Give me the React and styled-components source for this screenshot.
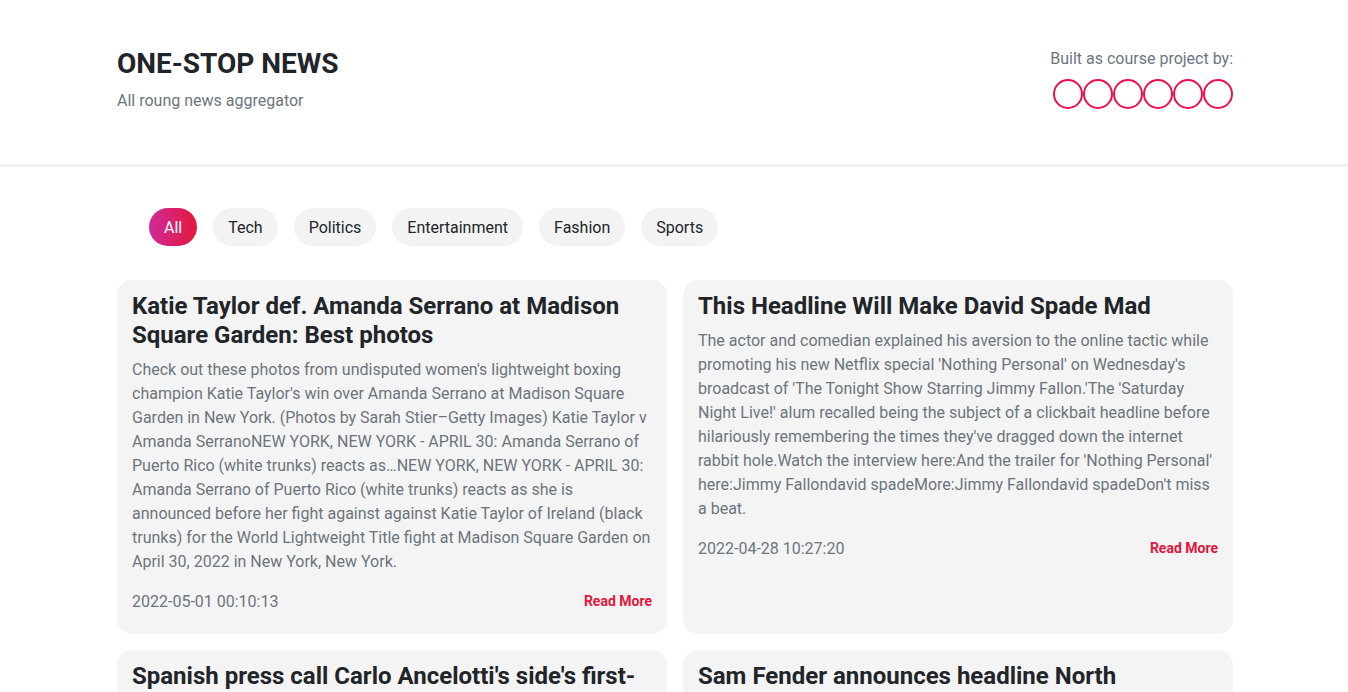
import React from "react";
import styled, { createGlobalStyle } from "styled-components";

const GlobalStyle = createGlobalStyle`
    body {
        margin: 0;
        background: #fff;
        font-family: Roboto, "Liberation Sans", sans-serif;
        color: #212529;
    }
    * { box-sizing: border-box; }
`

const Header = styled.header`
    border-bottom: 3px solid #f2f2f2;
`

const Container = styled.div`
    width: 1116px;
    margin-left: calc(50% - 557px);
`

const HeaderInner = styled(Container)`
    display: flex;
    justify-content: space-between;
    align-items: flex-start;
    padding: 47px 0 51px;
`

const Brand = styled.h1`
    margin: 0;
    font-size: 28px;
    font-weight: 700;
    line-height: 34px;
    color: #212529;
`

const Tagline = styled.p`
    margin: 8px 0 0;
    font-size: 16px;
    line-height: 24px;
    color: #6c757d;
`

const Credits = styled.div`
    display: flex;
    flex-direction: column;
    align-items: flex-end;
    gap: 9px;
`

const CreditsLabel = styled.span`
    font-size: 16px;
    line-height: 24px;
    color: #6c757d;
`

const Avatars = styled.div`
    display: flex;
    margin-top: -1px;
`

const Avatar = styled.span`
    width: 30px;
    height: 30px;
    border: 2px solid #ec0f50;
    border-radius: 50%;
`

const Filters = styled.nav`
    display: flex;
    gap: 16px;
    padding: 41px 0 34px 32px;
`

const Chip = styled.button`
    border: none;
    border-radius: 20px;
    padding: 8px 15px 6px;
    font-family: inherit;
    font-size: 16px;
    line-height: 24px;
    cursor: pointer;
    color: ${p => p.$active ? "#fff" : "#212529"};
    background: ${p => p.$active ? "linear-gradient(to right, #cf2a9b, #e4183b)" : "#f3f3f3"};
`

const Grid = styled.div`
    display: grid;
    grid-template-columns: 1fr 1fr;
    gap: 16px;
`

const Card = styled.article`
    display: flex;
    flex-direction: column;
    background: #f4f4f4;
    border-radius: 15px;
    padding: 12px 15px 20px;
`

const Title = styled.h2`
    margin: 0;
    font-size: 24px;
    font-weight: 700;
    line-height: 29px;
    color: #212529;
`

const Summary = styled.p`
    margin: 8px 0 0;
    font-size: 16px;
    line-height: 24px;
    color: #6c757d;
`

const Footer = styled.div`
    display: flex;
    justify-content: space-between;
    align-items: center;
    margin-top: 16px;
`

const Stamp = styled.span`
    font-size: 16px;
    line-height: 24px;
    color: #6c757d;
`

const ReadMore = styled.a`
    margin-bottom: 2px;
    font-size: 14px;
    font-weight: 700;
    color: #e0173c;
    text-decoration: none;
`

const categories = ["All", "Tech", "Politics", "Entertainment", "Fashion", "Sports"];

const articles = [
    {
        title: "Katie Taylor def. Amanda Serrano at Madison Square Garden: Best photos",
        summary: "Check out these photos from undisputed women's lightweight boxing champion Katie Taylor's win over Amanda Serrano at Madison Square Garden in New York. (Photos by Sarah Stier\u2013Getty Images) Katie Taylor v Amanda SerranoNEW YORK, NEW YORK - APRIL 30: Amanda Serrano of Puerto Rico (white trunks) reacts as\u2026NEW YORK, NEW YORK - APRIL 30: Amanda Serrano of Puerto Rico (white trunks) reacts as she is announced before her fight against against Katie Taylor of Ireland (black trunks) for the World Lightweight Title fight at Madison Square Garden on April 30, 2022 in New York, New York.",
        date: "2022-05-01 00:10:13"
    },
    {
        title: "This Headline Will Make David Spade Mad",
        summary: "The actor and comedian explained his aversion to the online tactic while promoting his new Netflix special 'Nothing Personal' on Wednesday's broadcast of 'The Tonight Show Starring Jimmy Fallon.'The 'Saturday Night Live!' alum recalled being the subject of a clickbait headline before hilariously remembering the times they've dragged down the internet rabbit hole.Watch the interview here:And the trailer for 'Nothing Personal' here:Jimmy Fallondavid spadeMore:Jimmy Fallondavid spadeDon't miss a beat.",
        date: "2022-04-28 10:27:20"
    },
    {
        title: "Spanish press call Carlo Ancelotti's side's first-half display against Manchester City a disaster",
        summary: "Real Madrid were left chasing shadows for long spells of the first leg at the Etihad, and the Spanish papers did not hold back in their verdict on the performance.",
        date: "2022-04-27 08:14:52"
    },
    {
        title: "Sam Fender announces headline North Yorkshire show for next summer",
        summary: "The North Shields singer-songwriter will play his biggest outdoor gig yet next summer, with tickets going on sale later this week.",
        date: "2022-04-26 09:41:05"
    }
];

function App() {
    return (
        <>
            <GlobalStyle />
            <Header>
                <HeaderInner>
                    <div>
                        <Brand>ONE-STOP NEWS</Brand>
                        <Tagline>All roung news aggregator</Tagline>
                    </div>
                    <Credits>
                        <CreditsLabel>Built as course project by:</CreditsLabel>
                        <Avatars>
                            {[0, 1, 2, 3, 4, 5].map(i => <Avatar key={i} />)}
                        </Avatars>
                    </Credits>
                </HeaderInner>
            </Header>
            <Container>
                <Filters>
                    {categories.map(c => <Chip key={c} $active={c === "All"}>{c}</Chip>)}
                </Filters>
                <Grid>
                    {articles.map(a => (
                        <Card key={a.title}>
                            <Title>{a.title}</Title>
                            <Summary>{a.summary}</Summary>
                            <Footer>
                                <Stamp>{a.date}</Stamp>
                                <ReadMore href="#">Read More</ReadMore>
                            </Footer>
                        </Card>
                    ))}
                </Grid>
            </Container>
        </>
    );
}

export default App;
